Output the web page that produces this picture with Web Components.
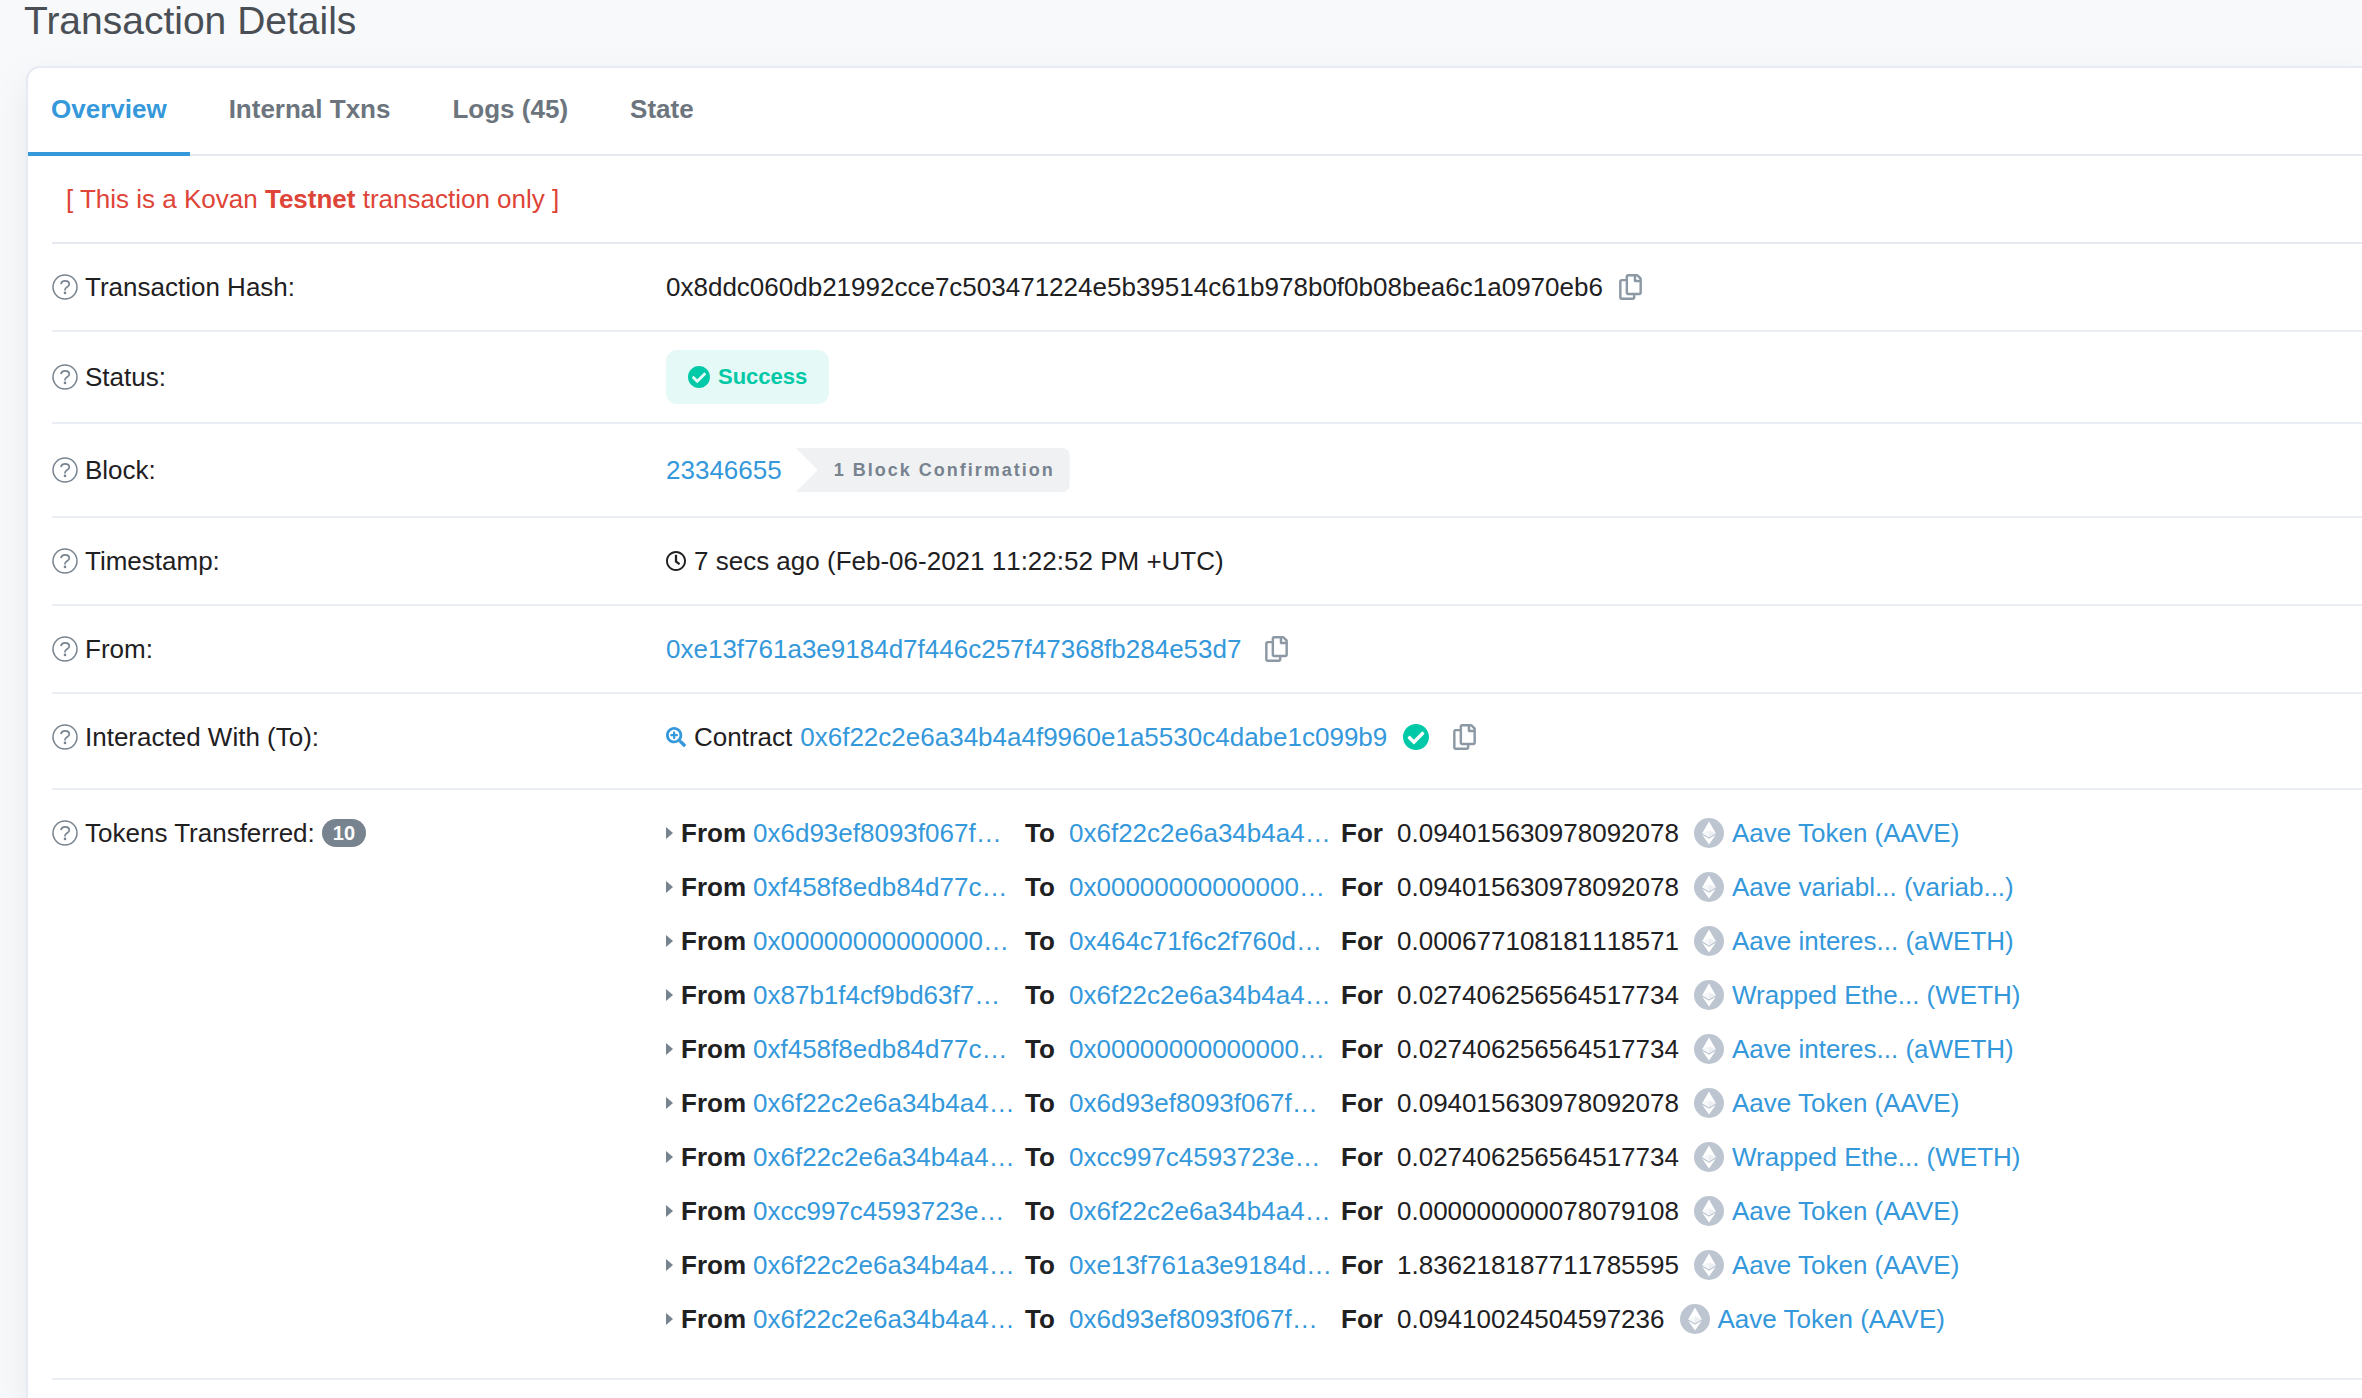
<!DOCTYPE html>
<html lang="en">
<head>
<meta charset="utf-8">
<title>Transaction Details</title>
<style>
  :root {
    --blue: #3498db; --ink: #1e2022; --grey: #77838f; --line: #e7eaf3;
    --green: #00c9a7; --red: #de4437;
  }
  html { background: #f8f9fb; }
  body {
    margin: 0; font: 26px/38px "Liberation Sans", Arial, sans-serif; color: var(--ink);
  }
</style>
</head>
<body>
<tx-page>
  <h1 slot="title">Transaction Details</h1>
  <tx-tabs slot="tabs"></tx-tabs>
  <tx-notice>[ This is a Kovan <b>Testnet</b> transaction only ]</tx-notice>
  <tx-row label="Transaction Hash:">
    <span>0x8ddc060db21992cce7c503471224e5b39514c61b978b0f0b08bea6c1a0970eb6</span>
    <copy-button></copy-button>
  </tx-row>
  <tx-row label="Status:" size="badge"><status-badge>Success</status-badge></tx-row>
  <tx-row label="Block:">
    <tx-link>23346655</tx-link>
    <confirmation-tag>1 Block Confirmation</confirmation-tag>
  </tx-row>
  <tx-row label="Timestamp:">
    <tx-icon name="clock" size="20"></tx-icon>
    <span>7 secs ago (Feb-06-2021 11:22:52 PM +UTC)</span>
  </tx-row>
  <tx-row label="From:">
    <tx-link>0xe13f761a3e9184d7f446c257f47368fb284e53d7</tx-link>
    <copy-button wide></copy-button>
  </tx-row>
  <tx-row label="Interacted With (To):" size="contract">
    <tx-icon name="zoom" size="20"></tx-icon>
    <span>Contract</span>
    <tx-link>0x6f22c2e6a34b4a4f9960e1a5530c4dabe1c099b9</tx-link>
    <tx-icon name="check" size="26" wide></tx-icon>
    <copy-button wide></copy-button>
  </tx-row>
  <tx-row label="Tokens Transferred:" count="10" size="list">
    <transfer-list></transfer-list>
  </tx-row>
</tx-page>

<script>
const define = (name, html, setup) => {
  const template = document.createElement('template');
  template.innerHTML = html;
  customElements.define(name, class extends HTMLElement {
    constructor() {
      super();
      this.attachShadow({ mode: 'open' }).append(template.content.cloneNode(true));
    }
    connectedCallback() {
      if (setup && !this.ready) { this.ready = true; setup(this, this.shadowRoot); }
    }
  });
};

const ICONS = {
  help: ['0 0 26 26', '<circle cx="13" cy="13" r="12" fill="none" stroke="currentColor" stroke-width="1.5"/><path d="M9.1 9.4C9.7 7.6 11.2 6.8 13 6.8c2.5 0 4.3 1.3 4.3 3.4 0 2.900-4.300 2.700-4.300 5.600" fill="none" stroke="currentColor" stroke-width="1.7" stroke-linecap="round"/><circle cx="13" cy="18.900" r="1.300" fill="currentColor"/>'],
  clock: ['8 8 496 496', '<path fill="currentColor" d="M256 8C119 8 8 119 8 256s111 248 248 248 248-111 248-248S393 8 256 8zm0 448c-110.500 0-200-89.500-200-200S145.500 56 256 56s200 89.500 200 200-89.500 200-200 200zm61.800-104.400l-84.900-61.700c-3.100-2.300-4.900-5.900-4.900-9.700V116c0-6.600 5.400-12 12-12h32c6.600 0 12 5.400 12 12v141.700l66.800 48.600c5.400 3.900 6.500 11.400 2.600 16.800L334.600 349c-3.900 5.300-11.400 6.500-16.800 2.600z"/>'],
  zoom: ['0 0 512 512', '<path fill="#3498db" d="M304 192v32c0 6.600-5.400 12-12 12h-56v56c0 6.600-5.400 12-12 12h-32c-6.600 0-12-5.400-12-12v-56h-56c-6.600 0-12-5.400-12-12v-32c0-6.600 5.400-12 12-12h56v-56c0-6.600 5.400-12 12-12h32c6.600 0 12 5.400 12 12v56h56c6.600 0 12 5.400 12 12zm201 284.700L476.700 505c-9.400 9.400-24.600 9.400-33.900 0L343 405.300c-4.500-4.500-7-10.600-7-17V372c-35.300 27.600-79.700 44-128 44C93.100 416 0 322.900 0 208S93.100 0 208 0s208 93.100 208 208c0 48.300-16.400 92.700-44 128h16.300c6.400 0 12.500 2.500 17 7l99.700 99.700c9.300 9.400 9.300 24.600 0 34zM344 208c0-75.200-60.800-136-136-136S72 132.800 72 208s60.800 136 136 136 136-60.800 136-136z"/>'],
  check: ['8 8 496 496', '<path fill="#00c9a7" d="M504 256c0 136.967-111.033 248-248 248S8 392.967 8 256 119.033 8 256 8s248 111.033 248 248zM227.314 387.314l184-184c6.248-6.248 6.248-16.379 0-22.627l-22.627-22.627c-6.248-6.249-16.379-6.249-22.628 0L216 308.118l-70.059-70.059c-6.248-6.248-16.379-6.248-22.628 0l-22.627 22.627c-6.248 6.248-6.248 16.379 0 22.627l104 104c6.249 6.249 16.379 6.249 22.628.001z"/>'],
  copy: ['0 0 448 512', '<path fill="currentColor" d="M433.941 65.941l-51.882-51.882A48 48 0 0 0 348.118 0H176c-26.510 0-48 21.490-48 48v48H48c-26.510 0-48 21.490-48 48v320c0 26.510 21.490 48 48 48h224c26.510 0 48-21.490 48-48v-48h80c26.510 0 48-21.490 48-48V99.882a48 48 0 0 0-14.059-33.941zM266 464H54a6 6 0 0 1-6-6V150a6 6 0 0 1 6-6h74v224c0 26.510 21.490 48 48 48h96v42a6 6 0 0 1-6 6zm128-96H182a6 6 0 0 1-6-6V54a6 6 0 0 1 6-6h106v88c0 13.255 10.745 24 24 24h88v202a6 6 0 0 1-6 6zm6-256h-64V48h9.632c1.591 0 3.117.632 4.243 1.757l48.368 48.368a6 6 0 0 1 1.757 4.243V112z"/>'],
  caret: ['0 0 7 12', '<path fill="#77838f" d="M0 0L7 6 0 12z"/>'],
  token: ['0 0 30 30', '<circle cx="15" cy="15" r="15" fill="#bdc5d1"/><path fill="#fff" d="M15 3.500L8.200 15.200 15 19.200l6.800-4z"/><path fill="#eceef1" d="M15 12.200l6.800 3-6.800 4z"/><path fill="#f6f7f9" d="M15 12.200v7l-6.800-4z"/><path fill="#fff" d="M8.200 16.700L15 20.700l6.800-4L15 26.500z"/>']
};

define('tx-icon', `
  <style>
    :host { display: inline-flex; flex: none; }
    :host([wide]) { margin-left: 8px; }
    svg { display: block; }
  </style>`, (host, root) => {
  const [box, shapes] = ICONS[host.getAttribute('name')];
  const h = +host.getAttribute('size');
  const [, , bw, bh] = box.split(' ').map(Number);
  root.innerHTML += `<svg viewBox="${box}" width="${Math.round(h * bw / bh)}" height="${h}" aria-hidden="true">${shapes}</svg>`;
});

define('tx-link', `
  <style>
    :host { display: inline-block; }
    a { color: var(--blue); text-decoration: none; }
    a:hover { text-decoration: underline; }
  </style>
  <a href="#"><slot></slot></a>`);

define('copy-button', `
  <style>
    :host { display: inline-flex; margin-left: 8px; }
    :host([wide]) { margin-left: 16px; }
    button { display: flex; padding: 0; border: 0; background: none; color: #8c98a4; cursor: pointer; }
  </style>
  <button type="button" aria-label="Copy"><tx-icon name="copy" size="26"></tx-icon></button>`);

define('status-badge', `
  <style>
    :host {
      display: inline-flex; align-items: center; gap: 8px; padding: 8px 22px; border-radius: 11px;
      background: rgba(0, 201, 167, .1); color: var(--green); font-size: 22px; font-weight: 700;
    }
  </style>
  <tx-icon name="check" size="22"></tx-icon><slot></slot>`);

define('confirmation-tag', `
  <style>
    :host {
      display: block; margin-left: 6px; padding: 0 15px 0 38px; border-radius: 0 8px 8px 0;
      background: #f0f1f3; color: var(--grey);
      font-size: 18px; line-height: 44px; font-weight: 700; letter-spacing: 2px;
      clip-path: polygon(0 0, 100% 0, 100% 100%, 0 100%, 22px 50%);
    }
  </style>
  <slot></slot>`);

define('tx-page', `
  <style>
    :host { display: flex; flex-direction: column; min-height: 100vh; overflow: hidden; }
    header { padding: 0 24px 24px; }
    ::slotted(h1) { margin: 0; font-size: 39px; line-height: 42px; font-weight: 400; color: #4a4f55; }
    main {
      flex: 1; margin-left: 26px; background: #fff;
      border: solid var(--line); border-width: 2px 0 0 2px; border-radius: 14px 0 0 0;
      box-shadow: 0 14px 34px rgba(160, 168, 176, .2);
    }
    section { padding-left: 24px; }
  </style>
  <header><slot name="title"></slot></header>
  <main>
    <slot name="tabs"></slot>
    <section><slot></slot></section>
  </main>`);

define('tx-tabs', `
  <style>
    :host { display: block; }
    nav { display: flex; gap: 16px; box-shadow: inset 0 -2px var(--line); }
    button {
      padding: 22px 23px 24px; border: 0; border-bottom: 4px solid transparent; background: none;
      font: inherit; font-weight: 700; color: #6c757e; cursor: pointer;
    }
    button[aria-selected=true] { color: var(--blue); border-color: var(--blue); }
  </style>
  <nav role="tablist">
    <button type="button" role="tab" aria-selected="true">Overview</button>
    <button type="button" role="tab" aria-selected="false">Internal Txns</button>
    <button type="button" role="tab" aria-selected="false">Logs (45)</button>
    <button type="button" role="tab" aria-selected="false">State</button>
  </nav>`);

define('tx-notice', `
  <style>
    :host { display: block; padding: 24px 14px; border-bottom: 2px solid var(--line); color: var(--red); }
  </style>
  <slot></slot>`);

define('tx-row', `
  <style>
    :host {
      display: grid; grid-template-columns: 614px 1fr; align-items: center;
      padding: 24px 0; border-bottom: 2px solid #e9edf4;
    }
    :host([size=badge]) { padding: 18px 0; }
    :host([size=contract]) { padding-bottom: 32px; }
    :host([size=list]) { padding-bottom: 40px; align-items: start; }
    .label, .value { display: flex; align-items: center; }
    .label { gap: 7px; }
    .value { gap: 8px; }
    ::slotted(span), ::slotted(tx-link) { font-kerning: none; }
    .count {
      padding: 0 11px; border-radius: 14px; background: var(--grey); color: #fff;
      font-size: 20px; line-height: 28px; font-weight: 700;
    }
    tx-icon { color: var(--grey); }
  </style>
  <div class="label"><tx-icon name="help" size="26"></tx-icon><span class="text"></span></div>
  <div class="value"><slot></slot></div>`, (host, root) => {
  root.querySelector('.text').textContent = host.getAttribute('label');
  if (host.hasAttribute('count')) {
    const count = document.createElement('span');
    count.className = 'count';
    count.textContent = host.getAttribute('count');
    root.querySelector('.label').append(count);
  }
});

const AAVE = 'Aave Token (AAVE)', WETH = 'Wrapped Ethe... (WETH)', AWETH = 'Aave interes... (aWETH)';
const TRANSFERS = [
  ['0x6d93ef8093f067f…', '0x6f22c2e6a34b4a4…', '0.094015630978092078', AAVE],
  ['0xf458f8edb84d77c…', '0x00000000000000…', '0.094015630978092078', 'Aave variabl... (variab...)'],
  ['0x00000000000000…', '0x464c71f6c2f760d…', '0.000677108181118571', AWETH],
  ['0x87b1f4cf9bd63f7…', '0x6f22c2e6a34b4a4…', '0.027406256564517734', WETH],
  ['0xf458f8edb84d77c…', '0x00000000000000…', '0.027406256564517734', AWETH],
  ['0x6f22c2e6a34b4a4…', '0x6d93ef8093f067f…', '0.094015630978092078', AAVE],
  ['0x6f22c2e6a34b4a4…', '0xcc997c4593723e…', '0.027406256564517734', WETH],
  ['0xcc997c4593723e…', '0x6f22c2e6a34b4a4…', '0.000000000078079108', AAVE],
  ['0x6f22c2e6a34b4a4…', '0xe13f761a3e9184d…', '1.836218187711785595', AAVE],
  ['0x6f22c2e6a34b4a4…', '0x6d93ef8093f067f…', '0.09410024504597236', AAVE]
];

define('token-transfer', `
  <style>
    :host { display: grid; grid-template-columns: 15px 72px 272px 44px 272px 56px 1fr; align-items: center; white-space: nowrap; }
    .amount { display: flex; align-items: center; }
    .amount tx-icon { margin: 0 8px 0 15px; }
    ::slotted([slot=amount]) { font-kerning: none; }
  </style>
  <tx-icon name="caret" size="12"></tx-icon>
  <b>From</b><tx-link><slot name="from"></slot></tx-link>
  <b>To</b><tx-link><slot name="to"></slot></tx-link>
  <b>For</b>
  <div class="amount"><slot name="amount"></slot><tx-icon name="token" size="30"></tx-icon><tx-link><slot name="token"></slot></tx-link></div>`);

define('transfer-list', `
  <style>
    :host { display: flex; flex-direction: column; gap: 16px; flex: 1; }
  </style>`, (host, root) => {
  for (const [from, to, amount, token] of TRANSFERS) {
    const item = document.createElement('token-transfer');
    for (const [name, text] of Object.entries({ from, to, amount, token })) {
      const span = document.createElement('span');
      span.slot = name;
      span.textContent = text;
      item.append(span);
    }
    root.append(item);
  }
});
</script>
</body>
</html>
